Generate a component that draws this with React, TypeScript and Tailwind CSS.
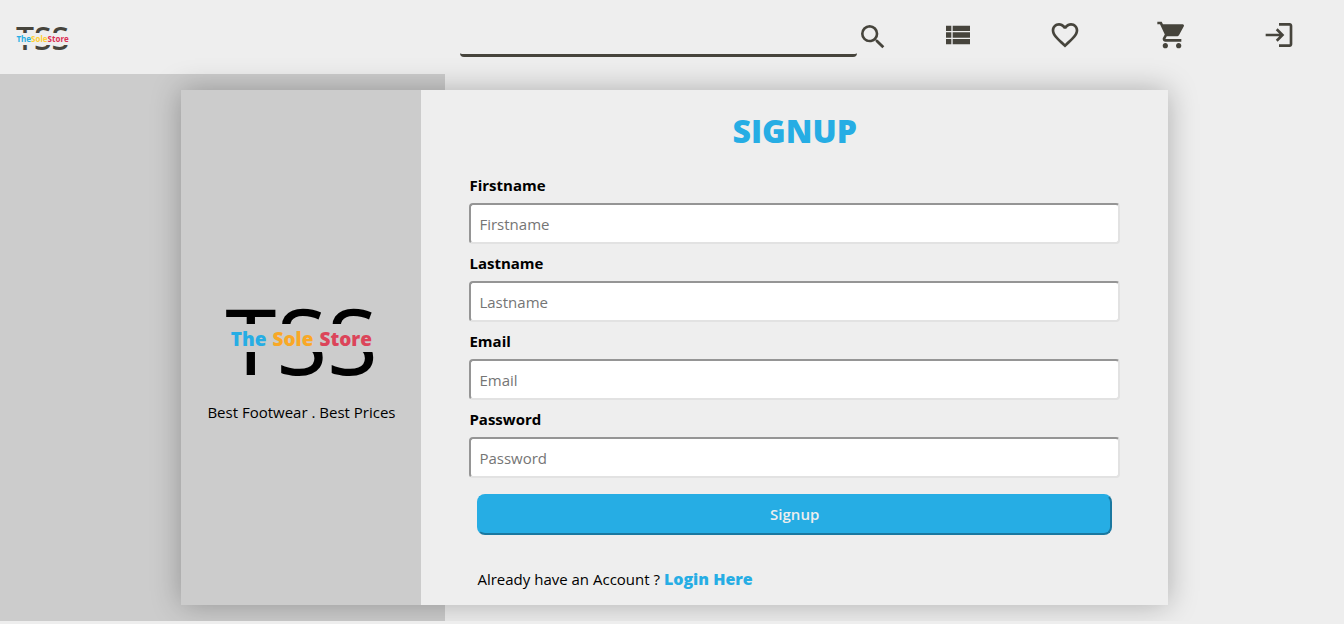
import React from "react";
import {
  MdFavoriteBorder,
  MdLogin,
  MdSearch,
  MdShoppingCart,
  MdViewList,
} from "react-icons/md";

const fields = [
  { id: "firstname", label: "Firstname", type: "text" },
  { id: "lastname", label: "Lastname", type: "text" },
  { id: "email", label: "Email", type: "email" },
  { id: "password", label: "Password", type: "password" },
];

const links = [
  { label: "Products", Icon: MdViewList },
  { label: "Wishlist", Icon: MdFavoriteBorder },
  { label: "Cart", Icon: MdShoppingCart },
  { label: "Login", Icon: MdLogin },
];

function Header() {
  return (
    <header className="grid h-[74px] grid-cols-[460fr_429fr_455fr] text-[#46443c]">
      <div className="flex items-center pt-0.5 pl-4">
        <a
          href="#"
          className="relative font-['Noto_Sans',sans-serif] text-[32px] leading-9 font-medium"
        >
          TSS
          <span className="absolute inset-x-0 top-[13px] flex h-3 items-center justify-center bg-[#eee] font-['Open_Sans',sans-serif] text-[8px] leading-3 font-bold whitespace-nowrap">
            <span className="text-[#26ade4]">The</span>
            <span className="text-[#ffcf33]">Sole</span>
            <span className="text-[#dc2f55]">Store</span>
          </span>
        </a>
      </div>
      <form className="flex items-start pt-[21px]">
        <input
          type="search"
          aria-label="Search"
          className="h-9 min-w-0 flex-1 rounded border-b-[3px] border-[#46443c] bg-transparent px-2 outline-none"
        />
        <button type="button" aria-label="Search">
          <MdSearch className="size-8" />
        </button>
      </form>
      <nav className="grid grid-cols-4 justify-items-center pt-[19px] pr-3 pl-4">
        {links.map(({ label, Icon }) => (
          <a key={label} href="#" aria-label={label} className="h-8">
            <Icon className="size-8" />
          </a>
        ))}
      </nav>
    </header>
  );
}

function Brand() {
  return (
    <aside className="flex w-60 shrink-0 flex-col items-center justify-center bg-[#ccc] pt-4">
      <div className="relative font-['Noto_Sans',sans-serif] text-[92px] leading-[104px]">
        TSS
        <div className="absolute inset-x-0 top-9 flex h-7 items-center justify-center gap-1.5 bg-[#ccc] pt-0.5 font-['Open_Sans',sans-serif] text-[19px] leading-7 font-extrabold whitespace-nowrap">
          <span className="text-[#26ade4]">The</span>
          <span className="text-[#f9a826]">Sole</span>
          <span className="text-[#dc4459]">Store</span>
        </div>
      </div>
      <p className="mt-2 text-[15px] leading-6">Best Footwear . Best Prices</p>
    </aside>
  );
}

function SignupForm() {
  return (
    <form className="flex-1 bg-[#eee] px-12 pt-5 pb-[13px]">
      <h1 className="mb-[23px] text-center text-[32px] leading-[42px] font-extrabold text-[#26ade4]">
        SIGNUP
      </h1>
      <div className="flex flex-col gap-[9px]">
        {fields.map(({ id, label, type }) => (
          <div key={id}>
            <label
              htmlFor={id}
              className="mb-2 block text-[15px] leading-5 font-bold"
            >
              {label}
            </label>
            <input
              id={id}
              type={type}
              placeholder={label}
              className="block h-[41px] w-full rounded border-2 border-t-[#959595] border-r-[#e2e2e2] border-b-[#e2e2e2] border-l-[#959595] bg-white px-2 text-[15px] placeholder:text-[#757575]"
            />
          </div>
        ))}
      </div>
      <div className="px-2 pt-4">
        <button
          type="button"
          className="block h-[41px] w-full rounded-lg border-2 border-t-[#26ade4] border-r-[#1a78a0] border-b-[#1a78a0] border-l-[#26ade4] bg-[#26ade4] text-[15px] font-semibold text-[#eee]"
        >
          Signup
        </button>
        <p className="mt-8 mb-px text-[15px] leading-6">
          Already have an Account ?{" "}
          <a href="#" className="text-[16px] font-extrabold text-[#26ade4]">
            Login Here
          </a>
        </p>
      </div>
    </form>
  );
}

export default function App() {
  return (
    <div className="min-h-screen bg-[#eee] font-['Open_Sans','Noto_Sans',sans-serif] text-black">
      <Header />
      <main className="bg-[linear-gradient(to_right,#ccc_33.1%,transparent_33.1%)] py-4 pr-[13.1%] pl-[13.5%] [clip-path:inset(-40px_0_0_0)]">
        <div className="flex shadow-[0_0_28px_rgba(0,0,0,0.28)]">
          <Brand />
          <SignupForm />
        </div>
      </main>
    </div>
  );
}
